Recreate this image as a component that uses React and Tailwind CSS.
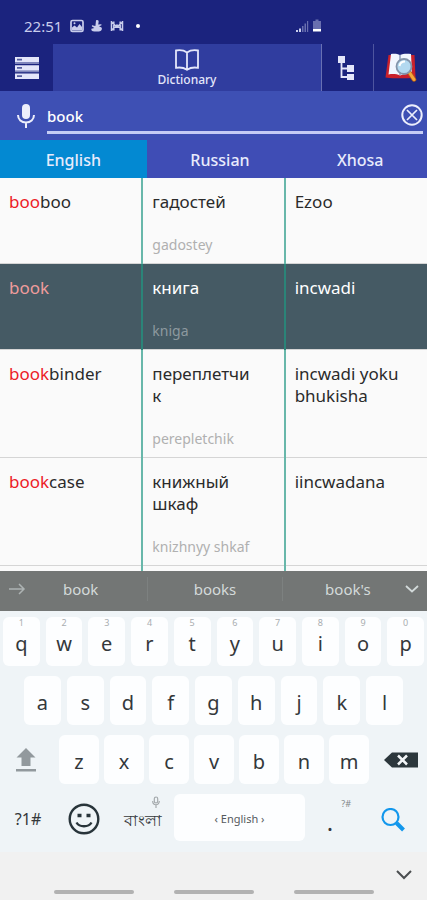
import { useState } from 'react'

const WORDS = [
  { match: 'boo', rest: 'boo', ru: 'гадостей', translit: 'gadostey', xh: 'Ezoo' },
  { match: 'book', rest: '', ru: 'книга', translit: 'kniga', xh: 'incwadi' },
  {
    match: 'book',
    rest: 'binder',
    ru: 'переплетчик',
    translit: 'perepletchik',
    xh: 'incwadi yoku bhukisha',
  },
  {
    match: 'book',
    rest: 'case',
    ru: 'книжный шкаф',
    translit: 'knizhnyy shkaf',
    xh: 'iincwadana',
  },
]

const LANGUAGES = ['English', 'Russian', 'Xhosa']

function StatusBar() {
  return (
    <div className="flex h-11 items-end bg-[#1b237e] px-6 pb-2 text-[#c9cdec]">
      <span className="text-[15px] leading-5">22:51</span>
      <svg className="ml-2 h-5 w-3.5" viewBox="0 0 14 20" fill="none">
        <rect x="1" y="4.5" width="12" height="11" rx="1.5" stroke="currentColor" strokeWidth="1.7" />
        <path d="M2 14.500v-3l2.500-2 2.500 2L9.500 8 12 11v3.500z" fill="currentColor" />
        <circle cx="4.500" cy="7.300" r="1" fill="currentColor" />
      </svg>
      <svg className="ml-1.5 h-5 w-3.5" viewBox="0 0 14 20" fill="currentColor">
        <path d="M6 4.500c1.500-1 3 0 2.600 1.800L8.200 8.500 11 8.200c.8 0 .8 1.200 0 1.400l-2 .6 2.500 1.400c1 1.200 0 3.900-2.500 3.900H4.500C2 15.500 1 14 1.400 12.700l3-.6L2 10.600c-.6-.8.2-1.600 1-1.200l2.400.6z" />
      </svg>
      <svg className="ml-1.5 h-5 w-3.5" viewBox="0 0 14 20" fill="none" stroke="currentColor" strokeWidth="1.500">
        <path d="M1.500 5v10M12.500 5v10M3.800 5.500v9M10.200 5.500v9M1.500 6l5.500 5 5.500-5M1.500 14.500 7 9l5.500 5.500" />
      </svg>
      <span className="mb-2 ml-3 size-1 rounded-full bg-white" />
      <svg className="mr-20 ml-auto h-5 w-7 shrink-0" viewBox="0 0 28 20" fill="currentColor">
        <path d="M1 14h2v2H1zM4 12.500h2V16H4z" />
        <path d="M7 10h1.500v6H7zM9.500 7.500H11V16H9.500zM12 5h1.200v11H12z" opacity=".45" />
        <path d="M20.500 3.500h3V5H26v8h-8V5h2.500z" opacity=".45" />
        <path d="M18 13h8v2.500h-8z" fill="#fff" />
      </svg>
    </div>
  )
}

function Toolbar() {
  return (
    <nav className="flex h-[47px] bg-[#1b237e] text-[#e4e6fa]">
      <button type="button" aria-label="Menu" className="flex w-[53px] items-center justify-center">
        <svg className="h-[22px] w-6" viewBox="0 0 24 24" preserveAspectRatio="none">
          <path d="M0 0h24v6H0zM0 9h24v6H0zM0 18h24v6H0z" fill="currentColor" />
          <path d="M0 6h24v1.500H0zM0 15h24v1.500H0z" fill="#8086bb" />
          <path d="M2 2h5v1.800H2zM2 11h5v1.800H2zM2 20h5v1.800H2z" fill="#555d9f" />
        </svg>
      </button>
      <button
        type="button"
        className="flex flex-1 flex-col items-center justify-center border-r border-[#6870b3] bg-[#303d9f]"
      >
        <svg className="h-6 w-6" viewBox="0 0 24 24" fill="none" stroke="currentColor" strokeWidth="1.800">
          <path d="M12 4.500C9 2.300 5 1.800 1 2.500v17.300c4-.7 8 0 11 2 3-2 7-2.700 11-2V2.500c-4-.7-8-.2-11 2zM12 4.500v17" />
        </svg>
        <span className="text-xs leading-4 font-medium">Dictionary</span>
      </button>
      <button
        type="button"
        aria-label="Categories"
        className="flex w-[52px] items-center justify-center border-r border-[#4e559f] pr-1"
      >
        <svg className="h-[26px] w-[18px]" viewBox="0 0 18 26" fill="currentColor">
          <path d="M1 1h7v7H1zM10 10h7v7h-7zM10 19h7v6h-7z" />
          <path d="M4.500 8v14H10M4.500 13.500H10" fill="none" stroke="currentColor" strokeWidth="1.800" />
        </svg>
      </button>
      <button type="button" aria-label="Search book" className="flex w-[53px] items-center justify-center">
        <svg className="h-[30px] w-8" viewBox="0 0 32 30">
          <path d="M3.500 2 .5 24.500c5 .8 10 .8 15 .8s10 0 15-.8L29.500 2z" fill="#c9202b" />
          <path d="M6 1 3.500 21.500c4-.8 8-.6 11.500 1 4-1.600 8-1.800 12-1L26 1c-4-.5-8-.5-11 1C12 .5 9 .5 6 1z" fill="#f1f6ff" />
          <path d="M15 2v20" stroke="#7c8fb0" strokeWidth="1.300" />
          <path d="m24 19 5 7.500" stroke="#b95d13" strokeWidth="4.500" strokeLinecap="round" />
          <path d="m24 19 5 7.500" stroke="#f5a63a" strokeWidth="3" strokeLinecap="round" />
          <circle cx="19" cy="13.500" r="7.500" fill="#b3d9f0" stroke="#8394aa" strokeWidth="1.800" />
          <path d="M14.500 13c.5-3 2.500-4.500 5.500-4.500" fill="none" stroke="#fff" strokeWidth="2" />
        </svg>
      </button>
    </nav>
  )
}

function SearchBar({ query, onChange }) {
  return (
    <div className="flex h-[49px] items-center bg-[#3e50b4] pr-1 text-[#eceefc]">
      <button type="button" aria-label="Voice search" className="flex w-[47px] justify-center pl-1">
        <svg className="h-[26px] w-[18px]" viewBox="0 0 18 26" fill="none" stroke="currentColor" strokeWidth="2">
          <rect x="5" y="1" width="8" height="15" rx="4" fill="currentColor" stroke="none" />
          <path d="M1 12c0 4.500 3.500 7.500 8 7.500s8-3 8-7.500M9 19.500V25" />
        </svg>
      </button>
      <div className="relative flex-1">
        <input
          type="text"
          aria-label="Search word"
          value={query}
          onChange={(e) => onChange(e.target.value)}
          className="block h-9 w-full border-b-3 border-[#c5cdf5] bg-transparent pt-1 pr-8 text-[15px] font-medium text-white outline-none"
        />
        <button type="button" aria-label="Clear" onClick={() => onChange('')} className="absolute top-1.5 right-0">
          <svg className="size-[22px]" viewBox="0 0 22 22" fill="none" stroke="currentColor" strokeWidth="2">
            <circle cx="11" cy="11" r="9.700" />
            <path d="m6 6 10 10M16 6 6 16" strokeWidth="1.700" />
          </svg>
        </button>
      </div>
    </div>
  )
}

function WordTable({ selected, onSelect }) {
  return (
    <div className="min-h-0 flex-1 overflow-hidden bg-[#fafafa]">
      <table className="w-full table-fixed border-collapse text-left text-[17px] leading-[22px] text-[#2b2b2b]">
        <tbody>
          {WORDS.map((word, i) => {
            const active = i === selected
            const divider = active ? 'border-r-2 border-r-[#2b8478]' : 'border-r-2 border-r-[#68b7aa]'
            return (
              <tr
                key={word.ru}
                onClick={() => onSelect(i)}
                className={active ? 'bg-[#455a64] text-white' : ''}
              >
                <td className={`${divider} border-b border-b-[#d5d5d5] px-[9px] pt-[13px] pb-2 align-top`}>
                  <span className={active ? 'text-[#ee9c9c]' : 'text-[#ec2027]'}>{word.match}</span>
                  {word.rest}
                </td>
                <td className={`${divider} border-b border-b-[#d5d5d5] pt-[13px] pr-7 pb-2 pl-[9px] align-top`}>
                  <div className="break-words">{word.ru}</div>
                  <div
                    className={`mt-[22px] text-sm leading-5 whitespace-nowrap ${active ? 'text-[#8d999f]' : 'text-[#b0b0b0]'}`}
                  >
                    {word.translit}
                  </div>
                </td>
                <td className="border-b border-b-[#d5d5d5] px-[9px] pt-[13px] pb-2 align-top">{word.xh}</td>
              </tr>
            )
          })}
          <tr className="h-20">
            <td className="border-r-2 border-r-[#68b7aa]" />
            <td className="border-r-2 border-r-[#68b7aa]" />
            <td />
          </tr>
        </tbody>
      </table>
    </div>
  )
}

function Suggestions() {
  return (
    <div className="flex h-10 items-center bg-[#737675] px-2 pb-1 text-[15px] text-[#d3dada]">
      <button type="button" aria-label="Expand" className="w-[18px]">
        <svg className="h-3 w-[18px]" viewBox="0 0 18 12" fill="none" stroke="#adb3b3" strokeWidth="1.500">
          <path d="M1 6h15M11 1l5 5-5 5" />
        </svg>
      </button>
      <div className="grid flex-1 grid-cols-[10fr_11fr_10fr] divide-x divide-[#7d8180]">
        <button type="button" className="h-6 pr-3">book</button>
        <button type="button" className="h-6">books</button>
        <button type="button" className="h-6 pl-2">book's</button>
      </div>
      <button type="button" aria-label="More suggestions">
        <svg className="h-2 w-3.5" viewBox="0 0 14 8" fill="none" stroke="currentColor" strokeWidth="1.800">
          <path d="m1 1 6 5.500L13 1" />
        </svg>
      </button>
    </div>
  )
}

function Key({ label, hint }) {
  return (
    <button
      type="button"
      className="relative flex h-[49px] flex-1 items-center justify-center rounded-md bg-[#fdfeff] pt-1 text-xl text-[#34383b]"
    >
      {hint && (
        <span className="absolute inset-x-0 top-0 text-[9px] leading-3 text-[#a9adb0]">{hint}</span>
      )}
      {label}
    </button>
  )
}

function Keyboard() {
  return (
    <div className="flex flex-col gap-2.5 bg-[#eff4f7] pt-1.5 pb-[11px] text-[#34383b]">
      <div className="flex gap-1.5 px-[3px]">
        {'qwertyuiop'.split('').map((k, i) => (
          <Key key={k} label={k} hint={String((i + 1) % 10)} />
        ))}
      </div>
      <div className="flex gap-1.5 px-6">
        {'asdfghjkl'.split('').map((k) => (
          <Key key={k} label={k} />
        ))}
      </div>
      <div className="flex gap-[5px]">
        <button type="button" aria-label="Shift" className="flex w-[54px] items-center justify-center pr-0.5">
          <svg className="h-6 w-5" viewBox="0 0 20 24" fill="#92999d">
            <path d="M10 0 19.500 9.500H14.500V18h-9V9.500H.5zM0 21h20v2.500H0z" />
          </svg>
        </button>
        {'zxcvbnm'.split('').map((k) => (
          <Key key={k} label={k} />
        ))}
        <button type="button" aria-label="Backspace" className="flex w-[53px] items-center justify-center">
          <svg className="h-4 w-[34px]" viewBox="0 0 34 16">
            <path d="M0 8 8 .5h26v15H8z" fill="#2c373c" />
            <path d="m14 3.500 9 9M23 3.500l-9 9" stroke="#f3f6f8" strokeWidth="2.500" />
          </svg>
        </button>
      </div>
      <div className="flex h-[47px]">
        <button type="button" className="w-14 pt-0.5 text-base">?1#</button>
        <button type="button" aria-label="Emoji" className="flex w-14 items-center justify-center pt-0.5">
          <svg className="size-8" viewBox="0 0 32 32" fill="none" stroke="#28343a" strokeWidth="2.400">
            <circle cx="16" cy="16" r="14.300" />
            <path d="M8.500 19.500c3 5 12 5 15 0" />
            <path d="M9.500 12.500h4M18.500 12.500h4" strokeWidth="3.500" />
          </svg>
        </button>
        <button type="button" className="relative w-[62px] pt-1 text-base font-medium">
          বাংলা
          <svg
            className="absolute top-0.5 right-3.5 h-3 w-2"
            viewBox="0 0 8 12"
            fill="none"
            stroke="#a4a9ac"
            strokeWidth="1.200"
          >
            <rect x="2.300" y="1" width="3.400" height="6" rx="1.700" />
            <path d="M.7 5c0 5 6.600 5 6.600 0M4 9v3" />
          </svg>
        </button>
        <button type="button" className="flex-1 rounded-md bg-[#fdfeff] pt-1 text-[11px] text-[#555a5d]">
          ‹ English ›
        </button>
        <button type="button" className="relative w-[54px] pt-2 pr-1 text-2xl">
          .
          <span className="absolute top-1 right-2 text-[9px] leading-3 text-[#81868a]">?#</span>
        </button>
        <button type="button" aria-label="Search" className="flex w-[68px] items-center justify-center pt-1">
          <svg className="size-6" viewBox="0 0 24 24" fill="none" stroke="#1297ec">
            <circle cx="9.500" cy="9" r="8" strokeWidth="2.200" />
            <path d="m15.500 15 7 7" strokeWidth="4" />
          </svg>
        </button>
      </div>
    </div>
  )
}

function SystemNav() {
  return (
    <div className="flex h-12 flex-col justify-between bg-[#f1f1f1] pt-[18px] pb-1.5">
      <button type="button" aria-label="Hide keyboard" className="mr-[15px] self-end">
        <svg className="h-2.5 w-4" viewBox="0 0 16 10" fill="none" stroke="#4b4e50" strokeWidth="2">
          <path d="m1 1 7 7 7-7" />
        </svg>
      </button>
      <div className="flex justify-center gap-10">
        <span className="h-1 w-20 rounded-full bg-[#b2b2b2]" />
        <span className="h-1 w-20 rounded-full bg-[#b2b2b2]" />
        <span className="h-1 w-20 rounded-full bg-[#b2b2b2]" />
      </div>
    </div>
  )
}

export default function App() {
  const [query, setQuery] = useState('book')
  const [language, setLanguage] = useState('English')
  const [selected, setSelected] = useState(1)

  return (
    <div className="flex h-dvh flex-col font-['Noto_Sans',sans-serif]">
      <StatusBar />
      <Toolbar />
      <SearchBar query={query} onChange={setQuery} />
      <div className="grid grid-cols-[34fr_34fr_31fr] text-base font-medium text-[#e8ebfc]">
        {LANGUAGES.map((name) => (
          <button
            key={name}
            type="button"
            onClick={() => setLanguage(name)}
            className={`h-[38px] pt-0.5 ${name === language ? 'bg-[#0389d2]' : 'bg-[#3f4db5]'}`}
          >
            {name}
          </button>
        ))}
      </div>
      <WordTable selected={selected} onSelect={setSelected} />
      <Suggestions />
      <Keyboard />
      <SystemNav />
    </div>
  )
}
